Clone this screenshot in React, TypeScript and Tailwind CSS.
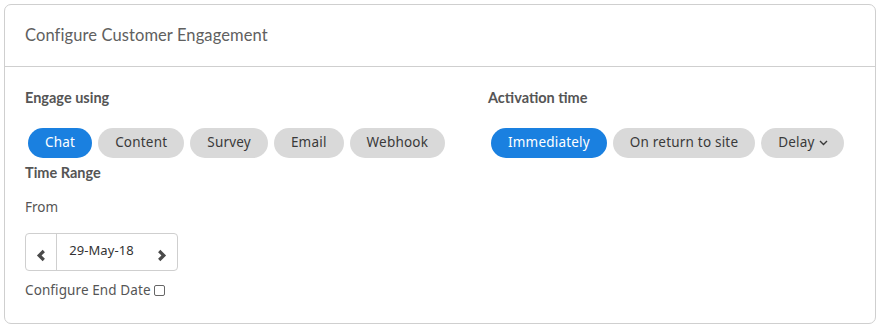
import { useState } from "react";

const pill = "h-[30px] rounded-full px-[17px] text-[13.5px] tracking-[0.2px] leading-none flex items-center";
const on = "bg-[#1a80e0] text-white";
const off = "bg-[#d9d9d9] text-[#3a3a3a]";

function Chevron({ dir }: { dir: "left" | "right" }) {
  return (
    <svg width="11" height="13" viewBox="0 0 11 13" className="mt-[7px]">
      <path
        d={dir === "left" ? "M7.8 2 L3.2 6.5 L7.8 11" : "M3.2 2 L7.8 6.5 L3.2 11"}
        fill="none"
        stroke="#4a4a4a"
        strokeWidth="3.2"
        strokeLinejoin="miter"
      />
    </svg>
  );
}

export default function App() {
  const [engage, setEngage] = useState("Chat");
  const [activation, setActivation] = useState("Immediately");
  const [endDate, setEndDate] = useState(false);

  const mont = { fontFamily: '"Noto Sans", "Open Sans", sans-serif' };
  const head = "text-[14.5px] font-bold text-[#555] leading-none";

  return (
    <div className="w-[879px] h-[328px] bg-white p-[4px] pr-[3px]" style={{ fontFamily: 'Lato, "Noto Sans", sans-serif' }}>
      <div className="w-[872px] h-[320px] border border-[#cfcfcf] rounded-[7px] flex flex-col">
        <div className="h-[62px] border-b border-[#cfcfcf] flex items-center pl-[20px]">
          <span className="text-[16.5px] text-[#606060] tracking-[0.1px]">Configure Customer Engagement</span>
        </div>
        <div className="pl-[20px] pt-[24px]" style={mont}>
          <div className="flex">
            <div className="w-[463px]">
              <div className={head} style={{ fontFamily: "Lato, sans-serif" }}>Engage using</div>
              <div className="flex gap-[6px] mt-[22px] ml-[3px]">
                {["Chat", "Content", "Survey", "Email", "Webhook"].map((t) => (
                  <button key={t} onClick={() => setEngage(t)} className={`${pill} ${engage === t ? on : off}`}>
                    {t}
                  </button>
                ))}
              </div>
            </div>
            <div>
              <div className={head} style={{ fontFamily: "Lato, sans-serif" }}>Activation time</div>
              <div className="flex gap-[6px] mt-[22px] ml-[3px]">
                {["Immediately", "On return to site"].map((t) => (
                  <button key={t} onClick={() => setActivation(t)} className={`${pill} ${activation === t ? on : off}`}>
                    {t}
                  </button>
                ))}
                <button onClick={() => setActivation("Delay")} className={`${pill} ${activation === "Delay" ? on : off} gap-[4px] pr-[16px]`}>
                  Delay
                  <svg width="9" height="6" viewBox="0 0 9 6">
                    <path d="M1 1 L4.5 4.5 L8 1" fill="none" stroke="currentColor" strokeWidth="1.4" />
                  </svg>
                </button>
              </div>
            </div>
          </div>
          <div className={`${head} mt-[8px]`} style={{ fontFamily: "Lato, sans-serif" }}>Time Range</div>
          <div className="text-[13.5px] text-[#555] leading-none mt-[21px]">From</div>
          <div className="mt-[18px] flex h-[38px] w-[153px] border border-[#cfcfcf] rounded-[4px]">
            <button className="w-[31px] flex items-center justify-center border-r border-[#cfcfcf]">
              <Chevron dir="left" />
            </button>
            <div className="w-[89px] flex items-center justify-center text-[13px] tracking-[0.1px] text-[#333] pb-[2px]">29-May-18</div>
            <button className="flex-1 flex items-center justify-center">
              <Chevron dir="right" />
            </button>
          </div>
          <label className="mt-[13px] flex items-center text-[13.5px] tracking-[0.1px] text-[#555] leading-none">
            Configure End Date
            <input
              type="checkbox"
              checked={endDate}
              onChange={(e) => setEndDate(e.target.checked)}
              className="ml-[3px] w-[11px] h-[11px] appearance-none border border-[#666] rounded-[2px] checked:bg-[#1a80e0]"
            />
          </label>
        </div>
      </div>
    </div>
  );
}
